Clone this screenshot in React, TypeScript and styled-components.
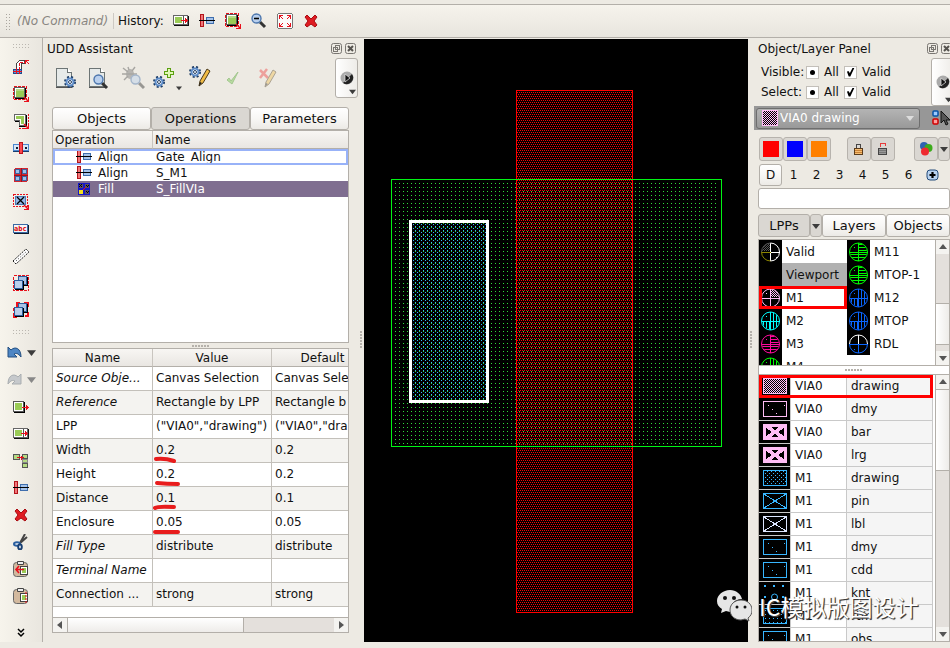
import React, { useId } from "react";
import styled, { createGlobalStyle, css } from "styled-components";

const line = "#b3afa9";
const raised = "linear-gradient(#ffffff, #f8f7f5 50%, #eceae6)";

const GlobalStyle = createGlobalStyle`
  *, *::before, *::after { box-sizing: border-box; }
  body {
    margin: 0;
    background: #edeae3;
    color: #111;
    font: 12px/16px "DejaVu Sans", sans-serif;
    overflow: hidden;
  }
  button, input, select { font: inherit; color: inherit; }
  button { padding: 0; border: 0; background: none; }
  h2 { margin: 0; font: inherit; }
  svg { display: block; flex: none; }
`;

/* ---------- page frame ---------- */
const Page = styled.div`
  height: 100vh;
  display: flex;
  flex-direction: column;
`;
const TopStrip = styled.div`
  height: 5px;
  flex: none;
  border-bottom: 1px solid ${line};
`;
const HistoryBar = styled.header`
  height: 33px;
  flex: none;
  display: flex;
  align-items: center;
  padding-left: 5px;
  border-bottom: 1px solid ${line};
  background: linear-gradient(#f6f3ec, #e8e5de);
`;
const GripV = styled.span`
  width: 5px;
  height: 17px;
  margin-right: 7px;
  background: radial-gradient(circle, #aaa69f 0 1px, transparent 1px) 0 0 / 3px 3px;
`;
const GripH = styled.span`
  width: 18px;
  height: 6px;
  background: radial-gradient(circle, #bbb7b0 0 1px, transparent 1px) 0 0 / 3px 3px;
`;
const CommandText = styled.span`
  min-width: 93px;
  white-space: nowrap;
  font-style: italic;
  color: #888580;
`;
const HistoryLabel = styled.span`
  margin: 0 4px 0 3px;
  padding-left: 4px;
  border-left: 1px solid #cdc9c3;
`;
const Main = styled.div`
  flex: 1;
  min-height: 0;
  display: flex;
  padding-bottom: 6px;
`;
const IconButton = styled.button<{ $w?: number; $h?: number }>`
  display: flex;
  align-items: center;
  justify-content: center;
  flex: none;
  width: ${(p) => p.$w ?? 26}px;
  height: ${(p) => p.$h ?? 27}px;
`;

/* ---------- left tool strip ---------- */
const ToolStrip = styled.nav`
  width: 43px;
  flex: none;
  display: flex;
  flex-direction: column;
  align-items: center;
  padding-top: 5px;
  border-right: 1px solid ${line};
  background: linear-gradient(90deg, #f7f4ec, #e9e6df);
`;
const ToolGroup = styled.div`
  display: flex;
  flex-direction: column;
  align-items: center;
  padding: 4px 0 6px;
`;
const UndoRow = styled.div`
  display: flex;
  align-items: center;
  height: 27px;
  gap: 5px;
`;
const StripEnd = styled.button`
  margin-top: auto;
  padding-bottom: 4px;
`;

/* ---------- shared dock parts ---------- */
const Dock = styled.section<{ $width: number }>`
  width: ${(p) => p.$width}px;
  flex: none;
  min-height: 0;
  display: flex;
  flex-direction: column;
`;
const DockHead = styled.div`
  height: 20px;
  flex: none;
  display: flex;
  align-items: center;
  justify-content: space-between;
  padding: 1px 0 0 4px;
`;
const WindowButtons = styled.div<{ $inset?: boolean }>`
  display: flex;
  gap: 3px;
  margin-right: ${(p) => (p.$inset ? 2 : -2)}px;
`;
const MenuButton = styled.button<{ $h: number; $bleed?: boolean }>`
  position: relative;
  width: 23px;
  height: ${(p) => p.$h}px;
  margin-right: ${(p) => (p.$bleed ? -4 : 0)}px;
  flex: none;
  display: grid;
  place-items: center;
  border: 1px solid ${line};
  border-radius: 3px;
  background: linear-gradient(90deg, #ffffff, #eeece8);
`;
const MenuArrow = styled.span`
  position: absolute;
  right: 1px;
  bottom: 2px;
`;
const Splitter = styled.div<{ $h: number }>`
  flex: none;
  height: ${(p) => p.$h}px;
  display: flex;
  align-items: center;
  justify-content: center;
`;
const Dots = styled.span`
  width: 18px;
  height: 2px;
  background: repeating-linear-gradient(90deg, #b5b1ab 0 2px, transparent 2px 3px);
`;
const SideHandle = styled.div`
  flex: none;
  width: 6px;
  display: flex;
  align-items: center;
  justify-content: center;
  &::before {
    content: "";
    width: 2px;
    height: 18px;
    background: repeating-linear-gradient(#b5b1ab 0 2px, transparent 2px 3px);
  }
`;
const Tab = styled.button<{ $on?: boolean }>`
  height: 23px;
  font-size: 13px;
  border: 1px solid ${line};
  border-radius: 3px;
  background: ${(p) => (p.$on ? "#dad7d2" : raised)};
`;
const TabRow = styled.div`
  display: grid;
  grid-template-columns: 1fr 1fr 1fr;
  flex: none;
`;

/* ---------- UDD assistant ---------- */
const AssistBody = styled.div`
  flex: 1;
  min-height: 0;
  display: flex;
  flex-direction: column;
  padding: 9px;
`;
const AssistTools = styled.div`
  height: 40px;
  flex: none;
  display: flex;
  align-items: center;
  padding-left: 6px;
`;
const DropMark = styled.button`
  align-self: flex-end;
  margin-bottom: 7px;
`;
const Push = styled.span`
  flex: 1;
`;
const OperationBox = styled.div`
  flex: 1;
  min-height: 60px;
  border: 1px solid ${line};
  background: #fff;
`;
const OperationTable = styled.table`
  width: 100%;
  table-layout: fixed;
  border-collapse: separate;
  border-spacing: 0;
  th {
    height: 18px;
    padding: 0 2px;
    font-weight: normal;
    text-align: left;
    background: linear-gradient(#f8f6f3, #e9e6e2);
    border-bottom: 1px solid ${line};
  }
  th + th { border-left: 1px solid #c9c5bf; }
  td { height: 16px; padding: 0 4px; line-height: 16px; }
`;
const OperationRow = styled.tr<{ $state?: "focus" | "selected" }>`
  ${(p) => p.$state === "focus" && css`outline: 2px solid #98b2f8; outline-offset: -2px;`}
  ${(p) => p.$state === "selected" && css`background: #7f6e90; color: #fff;`}
`;
const OperationName = styled.div`
  display: flex;
  align-items: center;
  gap: 6px;
  padding-left: 19px;
`;
const PropertyBox = styled.div`
  flex: none;
  display: flex;
  flex-direction: column;
  height: 285px;
  border: 1px solid ${line};
  background: #fff;
  overflow: hidden;
`;
const PropertyTable = styled.table`
  width: 321px;
  table-layout: fixed;
  border-collapse: separate;
  border-spacing: 0;
  th {
    height: 18px;
    padding: 0;
    font-weight: normal;
    background: linear-gradient(#f8f6f3, #e9e6e2);
    border-right: 1px solid #c9c5bf;
    border-bottom: 1px solid ${line};
  }
  td {
    position: relative;
    height: 24px;
    padding: 0 0 1px 3px;
    white-space: nowrap;
    border-right: 1px solid #c3c0ba;
    border-bottom: 1px solid #c3c0ba;
  }
  tbody tr:nth-child(even) { background: #f4f3f0; }
`;
const Underline = styled.svg`
  position: absolute;
  left: 0;
  bottom: -1px;
`;
const HScroll = styled.div`
  height: 15px;
  margin-top: auto;
  display: flex;
  border-top: 1px solid ${line};
  background: #e4e0dc;
`;
const ScrollButton = styled.button`
  flex: none;
  width: 14px;
  height: 14px;
  display: grid;
  place-items: center;
  background: #f4f3f0;
`;
const HThumb = styled.div`
  width: 60%;
  margin-right: auto;
  border: 1px solid ${line};
  border-width: 0 1px;
  background: linear-gradient(#fff, #eeece9);
`;

/* ---------- canvas ---------- */
const CanvasArea = styled.main`
  flex: 1;
  min-width: 0;
  margin-top: 1px;
  background: #000;
  svg { width: 100%; height: 100%; }
`;

/* ---------- layer panel ---------- */
const LayerDock = styled(Dock)`
  position: relative;
`;
const FilterRow = styled.div`
  display: flex;
`;
const Filters = styled.div`
  flex: 1;
  display: grid;
  grid-template-columns: 44px 38px 1fr;
  grid-auto-rows: 20px;
  align-items: center;
  align-content: start;
  padding: 4px 0 0 7px;
  height: 48px;
`;
const FilterLabel = styled.label`
  display: flex;
  align-items: center;
  gap: 5px;
`;
const Mark = styled.input`
  appearance: none;
  width: 13px;
  height: 13px;
  margin: 0 0 0 1px;
  flex: none;
  display: grid;
  place-items: center;
  background: #fff;
  border: 1px solid #c3bfb9;
  &:checked::before { content: ""; width: 5px; height: 5px; border-radius: 50%; background: #000; }
  &[type="checkbox"]:checked::before {
    width: 9px;
    height: 9px;
    border-radius: 0;
    clip-path: polygon(10% 45%, 32% 42%, 42% 65%, 75% 0, 95% 0, 48% 100%, 30% 100%);
  }
`;
const ComboBand = styled.div`
  flex: none;
  height: 24px;
  display: flex;
  align-items: center;
  gap: 12px;
  padding-left: 2px;
  background: #979797;
`;
const Combo = styled.label`
  width: 164px;
  height: 21px;
  display: flex;
  align-items: center;
  padding: 0 5px;
  border: 1px solid #6e6e6e;
  border-radius: 3px;
  background: linear-gradient(#b4b4b4, #999);
`;
const ComboSelect = styled.select`
  flex: 1;
  appearance: none;
  border: 0;
  padding: 0 0 0 2px;
  background: none;
  color: #fff;
`;
const Swatches = styled.div`
  flex: none;
  display: flex;
  height: 24px;
  margin: 7px 0 2px 5px;
`;
const SquareButton = styled.button<{ $w?: number }>`
  width: ${(p) => p.$w ?? 24}px;
  height: 24px;
  flex: none;
  display: grid;
  place-items: center;
  background: #dad7d2;
  border: 1px solid #b7b3ad;
  border-radius: 3px;
`;
const TabArrow = styled(SquareButton)`
  height: 23px;
`;
const Chip = styled.span<{ $c: string }>`
  width: 16px;
  height: 16px;
  background: ${(p) => p.$c};
`;
const Space = styled.span<{ $w: number }>`
  width: ${(p) => p.$w}px;
`;
const Levels = styled.div`
  flex: none;
  display: flex;
  align-items: center;
  height: 24px;
  margin: 0 6px 1px 5px;
`;
const Level = styled.button<{ $on?: boolean }>`
  width: 23px;
  height: 22px;
  ${(p) => p.$on && css`border: 1px solid ${line}; border-radius: 3px; background: ${raised};`}
`;
const SearchBox = styled.input`
  flex: none;
  height: 21px;
  min-width: 0;
  margin: 0 0 5px 4px;
  background: #fff;
  border: 1px solid ${line};
  border-radius: 3px;
`;
const LayerTabs = styled.div`
  flex: none;
  display: grid;
  grid-template-columns: 52px 12px 64px 1fr;
  margin: 0 0 2px 4px;
`;
const Lists = styled.div`
  flex: 1;
  min-height: 0;
  display: flex;
  flex-direction: column;
  margin-left: 4px;
  border: 1px solid ${line};
  background: #fff;
`;
const GroupPane = styled.div`
  height: 126px;
  flex: none;
  display: flex;
  overflow: hidden;
  border-bottom: 1px solid ${line};
`;
const GroupColumn = styled.ul`
  flex: 1;
  margin: 0;
  padding: 0;
  list-style: none;
`;
const GroupItem = styled.li<{ $gray?: boolean; $boxed?: boolean }>`
  position: relative;
  display: flex;
  align-items: center;
  height: 23px;
  gap: 4px;
  background: ${(p) => (p.$gray ? "#b1b1b1" : "#fff")};
  ${(p) => p.$boxed && css`&::after { content: ""; position: absolute; inset: 0; border: 3px solid #f00; }`}
`;
const LayerPane = styled.div`
  flex: 1;
  min-height: 0;
  display: flex;
  gap: 2px;
  overflow: hidden;
  border-top: 1px solid ${line};
`;
const TableClip = styled.div`
  flex: 1;
  min-width: 0;
  overflow: hidden;
`;
const LayerTable = styled.table`
  width: 100%;
  table-layout: fixed;
  border-collapse: separate;
  border-spacing: 0;
  td {
    height: 23px;
    padding: 0 4px;
    border-right: 1px solid #c9c9c9;
    border-bottom: 1px solid #c9c9c9;
  }
  td:first-child { background: #000; }
  td:last-child { background: #f5f5f5; }
`;
const LayerRow = styled.tr<{ $boxed?: boolean }>`
  ${(p) => p.$boxed && css`outline: 3px solid #f00; outline-offset: -3px;`}
`;
const VScroll = styled.div`
  width: 14px;
  flex: none;
  display: flex;
  flex-direction: column;
  border-left: 1px solid ${line};
  background: #e4e0dc;
`;
const VThumb = styled.div<{ $top: number; $size: number }>`
  margin-top: ${(p) => p.$top}px;
  height: ${(p) => p.$size}px;
  margin-bottom: auto;
  border: 1px solid ${line};
  border-width: 1px 0;
  background: linear-gradient(90deg, #fff, #eeece9);
`;
const Watermark = styled.div`
  position: absolute;
  left: -37px;
  bottom: 19px;
  display: flex;
  align-items: center;
  gap: 7px;
  white-space: nowrap;
  pointer-events: none;
  color: #fff;
  font: 23px/34px "Noto Sans CJK SC", sans-serif;
  text-shadow: 1px 1px 1px #333, 1px 1px 0 #777;
`;

/* ---------- icons ---------- */
type IconProps = { w?: number; h?: number; box?: string; soft?: boolean; children: React.ReactNode };
const Icon = ({ w = 16, h = 16, box, soft, children }: IconProps) => (
  <svg width={w} height={h} viewBox={box ?? `0 0 ${w} ${h}`} fill="none" shapeRendering={soft ? "auto" : "crispEdges"} aria-hidden="true">
    {children}
  </svg>
);
const Triangle = ({ dir = "down", size = 8, color = "#3c3c3c" }: { dir?: "up" | "down" | "left" | "right"; size?: number; color?: string }) => {
  const turn = { down: 0, left: 90, up: 180, right: 270 }[dir];
  return (
    <Icon w={size} h={size} box="0 0 8 8" soft>
      <path d="M0 2h8L4 7z" fill={color} transform={`rotate(${turn} 4 4)`} />
    </Icon>
  );
};
const CornerArrow = () => (
  <g stroke="#e8101c">
    <path d="M11 11l4 4" shapeRendering="auto" strokeWidth="1.4" />
    <path d="M15.5 11v4.500H11" />
  </g>
);
const GreenSquare = () => (
  <Icon>
    <rect x="0.5" y="0.5" width="13" height="13" stroke="#e8101c" strokeDasharray="3 1" />
    <rect x="1" y="1" width="12" height="12" fill="#f3b9b4" />
    <rect x="1.5" y="1.5" width="10" height="10" fill="#fff" stroke="#5a5a5a" />
    <path d="M2 12.500h10.500V2" stroke="#000" />
    <rect x="3" y="3" width="8" height="8" fill="#9acb55" />
    <path d="M3 3h8v2H3z" fill="#b5da83" />
    <CornerArrow />
  </Icon>
);
const GreenPoly = () => (
  <Icon>
    <path d="M1.500 1.500h11v11h-6v-5h-5z" fill="#fff" stroke="#666" />
    <path d="M3 3h8v8H8V6H3z" fill="#9acb55" />
    <path d="M2 8.500h4M6 13.500h7.500V2" stroke="#000" />
    <path d="M15 1v10M6 15h5" stroke="#e8101c" strokeDasharray="2 1" />
    <CornerArrow />
  </Icon>
);
const RoutePath = () => (
  <Icon>
    <path d="M3.500 12V4.500l3-3H11v3H8.500v8z" fill="#fff" stroke="#444" />
    <path d="M6 15V3.500h6" stroke="#e8101c" strokeDasharray="3 1" />
    <rect x="0.500" y="10.500" width="8" height="4" fill="#5c93dc" stroke="#1c4c8e" />
    <path d="M0 12.500h9M3.500 9v6M6.500 9v6" stroke="#e8101c" />
    <path d="M12.500 5V1.500H16M13 2l3 3" stroke="#e8101c" />
  </Icon>
);
const PinPair = () => (
  <Icon>
    <rect x="0.5" y="4.500" width="6" height="6" fill="#d9e6f6" stroke="#4c87cf" />
    <rect x="9.5" y="4.500" width="6" height="6" fill="#d9e6f6" stroke="#4c87cf" />
    <path d="M0 11.500h16" stroke="#173e6e" />
    <path d="M3 7h2v2H3zM12 7h2v2h-2z" fill="#123" />
    <rect x="6.500" y="2.500" width="3" height="11" fill="#f8484f" stroke="#c2121a" />
  </Icon>
);
const GridFour = () => (
  <Icon>
    <rect x="1" y="1" width="14" height="14" rx="2" fill="#d4252e" />
    <path d="M2.500 2.500h4v4h-4zM9.500 2.500h4v4h-4zM2.500 9.500h4v4h-4zM9.500 9.500h4v4h-4z" fill="#9dc0ea" stroke="#3a63a0" />
    <path d="M8 1v14M1 8h14" stroke="#a0101a" />
  </Icon>
);
const Instance = () => (
  <Icon>
    <rect x="0.5" y="0.5" width="14" height="12" stroke="#e8101c" strokeDasharray="2 1" />
    <rect x="2.500" y="2.500" width="10" height="8" fill="#94b8e6" stroke="#4d79b4" />
    <path d="M4 3l7 7M11 3l-7 7" stroke="#000" strokeWidth="1.3" shapeRendering="auto" />
    <CornerArrow />
  </Icon>
);
const TextTag = () => (
  <Icon>
    <rect x="1" y="4" width="15" height="9" fill="#0c1c30" />
    <rect x="0.500" y="3.500" width="14" height="8" fill="#f4f6fa" stroke="#3a6aa4" />
    <text x="1" y="10" fontSize="7" fontWeight="bold" fontFamily="DejaVu Sans Mono, monospace" fill="#d00" shapeRendering="auto">abc</text>
  </Icon>
);
const Ruler = () => (
  <Icon soft>
    <path d="M0 13L13 1l3 3L3 16z" fill="#fff" stroke="#222" strokeWidth="1" strokeDasharray="2 1" />
    <path d="M3 13L14 3" stroke="#333" strokeDasharray="1 2" />
  </Icon>
);
const Stack = ({ corners }: { corners?: boolean }) => (
  <Icon>
    {corners ? (
      <path d="M4 5V1h3M11 1h4v4M15 10v4h-3M1 11v4h3M1 9V7h3" stroke="#f00f1c" strokeWidth="2" />
    ) : (
      <rect x="0.5" y="0.5" width="15" height="15" stroke="#e8101c" strokeDasharray="3 1" />
    )}
    <rect x="5.500" y="1.500" width="8" height="8" fill="#a9c3e6" stroke="#2b5c9c" />
    <path d="M6 10.500h8.500V2" stroke="#000" />
    <rect x="1.500" y="5.500" width="8" height="8" fill="#b9cfec" stroke="#2b5c9c" />
    <path d="M2 14.500h8.500V6" stroke="#000" />
  </Icon>
);
const UndoArrow = ({ flip, faded }: { flip?: boolean; faded?: boolean }) => (
  <Icon w={15} h={13} soft>
    <path
      d="M1 1l3 3c4-4 10-2 10 7-3-4-5-4-7-3l3 3H1z"
      fill={faded ? "#c6c9cc" : "#4e86c4"}
      stroke={faded ? "#a9adb0" : "#244f80"}
      transform={flip ? "matrix(-1 0 0 1 15 0)" : undefined}
    />
  </Icon>
);
const StretchOut = () => (
  <Icon>
    <rect x="0.500" y="2.500" width="10" height="10" fill="#fff" stroke="#555" />
    <path d="M1 13.500h10.500V3" stroke="#000" />
    <rect x="2" y="4" width="7" height="7" fill="#9acb55" />
    <path d="M9 8.500h7M13.500 6v5M14.500 7v3" stroke="#e8101c" />
  </Icon>
);
const StretchIn = () => (
  <Icon>
    <path d="M0.500 2.500h14v9h-14z" fill="#fff" stroke="#666" />
    <path d="M1 12.500h14.500V3" stroke="#111" />
    <path d="M10.500 3v9" stroke="#555" />
    <rect x="2" y="4" width="7" height="6" fill="#9acb55" />
    <path d="M8 7.500h7M12.500 5v5M13.500 6v3" stroke="#e8101c" />
  </Icon>
);
const Tree = () => (
  <Icon>
    <rect x="0.500" y="1.500" width="6" height="5" fill="#b5da83" stroke="#555" />
    <rect x="9.500" y="1.500" width="5" height="4" fill="#b5da83" stroke="#555" />
    <rect x="9.500" y="6.500" width="5" height="3" fill="#b5da83" stroke="#888" />
    <rect x="9.500" y="10.500" width="5" height="4" fill="#b5da83" stroke="#555" />
    <path d="M4 4.500h7M8.500 3v4" stroke="#e8101c" />
  </Icon>
);
const AlignIcon = () => (
  <Icon>
    <rect x="1.5" y="1.5" width="3" height="12" fill="#f0777a" stroke="#b3141b" />
    <rect x="7.5" y="4.5" width="7" height="6" fill="#a5c3ea" stroke="#3f6ead" />
    <path d="M0 7.500h16" stroke="#000" />
  </Icon>
);
const RedX = () => (
  <Icon w={14} h={14} soft>
    <path d="M1 3l2-2 4 4 4-4 2 2-3 4 3 4-2 2-4-3-4 3-2-2 3-4z" fill="#df1c22" stroke="#a90c12" />
  </Icon>
);
const Scissors = () => (
  <Icon soft>
    <path d="M12 0L7 9M14 3L6 10" stroke="#444" strokeWidth="2" />
    <ellipse cx="4" cy="10" rx="3" ry="1.8" stroke="#2a5f9f" strokeWidth="2" fill="#fff" />
    <ellipse cx="7" cy="13" rx="1.8" ry="2.4" stroke="#173f73" strokeWidth="2" fill="#fff" />
  </Icon>
);
const Clip = ({ arrow }: { arrow?: boolean }) => (
  <Icon soft>
    <rect x="0.500" y="1.500" width="14" height="14" rx="3" fill="#d3b99e" stroke="#666" />
    <path d="M4.500 0.500h6v3h-6z" fill="#eee" stroke="#444" />
    <rect x="7.500" y="5.500" width="7" height="8" fill="#fff" stroke="#444" />
    <rect x="9" y="7" width="4" height="5" fill="#9acb55" />
    {arrow ? <path d="M11 8.500H3M6 5L3 8.500 6 12" stroke="#e8101c" strokeWidth="1.6" /> : <path d="M13 4v12" stroke="#e8101c" strokeDasharray="2 1" />}
  </Icon>
);
const Chevrons = () => (
  <Icon w={8} h={10} soft>
    <path d="M1 1l3 3 3-3M1 5l3 3 3-3" stroke="#000" strokeWidth="1.5" />
  </Icon>
);
const Lens = ({ x, y, minus }: { x: number; y: number; minus?: boolean }) => (
  <g transform={`translate(${x} ${y})`} shapeRendering="auto">
    <path d="M9 9l5 5" stroke="#333" strokeWidth="3" />
    <circle cx="5.500" cy="5.500" r="4.500" fill="#b9d0ee" stroke="#4c76ad" strokeWidth="1.400" />
    {minus && <path d="M3 5.500h5" stroke="#000" strokeWidth="1.6" />}
  </g>
);
const ZoomOut = () => <Icon><Lens x={0} y={0} minus /></Icon>;
const Fit = () => (
  <Icon>
    <rect x="0.5" y="0.5" width="15" height="15" rx="2" fill="#fbfbfa" stroke="#777" />
    <path d="M6 6L3 3M2.500 6V2.500H6M10 6l3-3M10 2.500h3.500V6M6 10l-3 3M2.500 10v3.500H6M10 10l3 3M13.500 10v3.500H10" stroke="#e8101c" />
  </Icon>
);
const Gear = ({ x, y }: { x: number; y: number }) => (
  <g transform={`translate(${x} ${y})`} shapeRendering="auto">
    <circle cx="6" cy="6" r="5" stroke="#1d3d66" strokeWidth="2" strokeDasharray="2 2" />
    <circle cx="6" cy="6" r="3.500" fill="#fff" stroke="#5c8bc8" strokeWidth="2" />
    <circle cx="6" cy="6" r="1.500" fill="#fff" stroke="#223f66" />
  </g>
);
const Sheet = () => (
  <>
    <path d="M2.500 2.500h11l4 4v14h-15z" fill="#e6eae9" stroke="#6d7575" />
    <path d="M13.500 2.500v4h4" fill="#fff" stroke="#6d7575" />
    <path d="M2 21.500h16" stroke="#555" />
  </>
);
const SheetGear = () => <Icon w={24} h={24}><Sheet /><Gear x={10} y={10} /></Icon>;
const SheetLens = () => <Icon w={24} h={24}><Sheet /><Lens x={6} y={8} /></Icon>;
const BugLens = () => (
  <Icon w={24} h={24} soft>
    <g opacity="0.45">
      <ellipse cx="9" cy="8" rx="4" ry="5" fill="#777" />
      <path d="M2 2l5 4M14 1l-3 4M1 8h15M3 14l4-4M13 11l3 3M7 1l1 3" stroke="#555" strokeWidth="1.400" />
      <Lens x={9} y={8} />
    </g>
  </Icon>
);
const GearPlus = () => (
  <Icon w={24} h={24}>
    <Gear x={1} y={10} />
    <path d="M15.500 2.500h3v3h3v3h-3v3h-3v-3h-3v-3h3z" fill="#e0f7b4" stroke="#5a9f10" />
  </Icon>
);
const Pencil = ({ x }: { x: number }) => (
  <g transform={`translate(${x} 0)`} shapeRendering="auto">
    <path d="M0 20l1-5L8 3l3 2L4 17z" fill="#f1bc45" stroke="#4b3a1c" />
    <path d="M0 20l1-4 2 1z" fill="#222" />
  </g>
);
const GearPencil = () => <Icon w={24} h={24}><Gear x={1} y={0} /><Pencil x={11} /></Icon>;
const Check = () => (
  <Icon w={14} h={14} soft>
    <path d="M1 9l2-2 2 3 7-9-6 12z" fill="#b8dba0" stroke="#a3c78f" />
  </Icon>
);
const XPencil = () => (
  <Icon w={20} h={22} soft>
    <g opacity="0.4"><path d="M2 3l8 8M9 2L2 11" stroke="#e33" strokeWidth="2.500" /><Pencil x={7} /></g>
  </Icon>
);
const Restore = () => (
  <Icon w={11} h={11}>
    <rect x="0.500" y="0.500" width="10" height="10" rx="2" stroke="#7a7772" shapeRendering="auto" />
    <path d="M4.500 2.500h4v4h-4zM2.500 4.500h4v4h-4z" stroke="#7a7772" />
  </Icon>
);
const Close = () => (
  <Icon w={11} h={11} soft>
    <rect x="0.500" y="0.500" width="10" height="10" rx="2" stroke="#7a7772" />
    <path d="M3 3l5 5M8 3L3 8" stroke="#55524e" strokeWidth="2" />
  </Icon>
);
const Play = () => (
  <Icon w={14} h={14} soft>
    <circle cx="7" cy="7" r="6.500" fill="#aaa" />
    <path d="M12 3a6.500 6.500 0 0 1-9 9z" fill="#222" />
    <path d="M5 3l5 4-5 4z" fill="#111" stroke="#ddd" strokeWidth="0.800" />
  </Icon>
);
const FillIcon = () => (
  <Icon w={16} h={12} box="-2 0 16 12">
    <rect width="12" height="12" fill="#1616c8" />
    <path d="M1 1h4v4H1zM7 1h4v4H7zM7 7h4v4H7z" fill="#5a5060" />
    <path d="M1 1h1v1H1zM3 1h1v1H3zM2 2h1v1H2zM1 3h1v1H1zM3 3h1v1H3zM8 2h1v1H8zM10 2h1v1h-1zM9 3h1v1H9zM8 8h1v1H8zM10 8h1v1h-1zM9 9h1v1H9z" fill="#000" />
    <path d="M5 7l3-3" stroke="#e11" />
    <path d="M1 7h4v4H1z" fill="#f2df1f" />
  </Icon>
);
const PickIcon = () => (
  <Icon w={18} h={16} soft>
    <rect x="1" y="1" width="5" height="5" rx="1" fill="#9ccaff" stroke="#0754a8" strokeWidth="1.500" />
    <rect x="1" y="9" width="5" height="5" rx="1" fill="#ff9f9f" stroke="#cf0000" strokeWidth="1.500" />
    <path d="M9 1v12l3-3 2 5 2-1-2-4h4z" fill="#555" stroke="#111" />
  </Icon>
);
const Lock = ({ open }: { open?: boolean }) => (
  <Icon w={12} h={14}>
    <path d={open ? "M3.500 5V1.500h5V4" : "M3.500 6V2.500h4V6"} stroke={open ? "#e63b3b" : "#444"} />
    <rect x="1.500" y="6.500" width="8" height="6" fill={open ? "#999" : "#f5bd73"} stroke={open ? "#444" : "#5a3c1c"} />
    <path d="M2 8.500h7M2 10.500h7" stroke={open ? "#777" : "#c98236"} />
  </Icon>
);
const Balls = () => (
  <Icon w={14} h={14} soft>
    <circle cx="5" cy="4" r="4" fill="#2e63b0" />
    <circle cx="9.500" cy="6" r="4" fill="#3cab1b" />
    <circle cx="6" cy="9.500" r="4" fill="#ee2a2f" />
  </Icon>
);
const PlusRound = () => (
  <Icon w={13} h={12} soft>
    <rect x="1" y="1" width="11" height="10" rx="3" fill="#b9d3f0" stroke="#234a78" />
    <path d="M6.500 3v6M3.500 6h6" stroke="#000" strokeWidth="2.200" />
  </Icon>
);

/* ---------- layer swatches ---------- */
type Hatch = "v" | "h" | "checker" | "dot" | "none";
type WheelSpec = { top: string; left?: string; bottom?: string; quads: [Hatch, Hatch, Hatch, Hatch] };
const Wheel = ({ spec }: { spec?: WheelSpec }) => {
  const id = useId().replace(/[^a-zA-Z0-9]/g, "");
  if (!spec) return <Icon w={23} h={23}><rect width="23" height="23" fill="#000" /></Icon>;
  const bottom = spec.bottom ?? spec.top;
  const mixed = spec.left !== undefined;
  const origin = [[2, 3], [12, 3], [2, 13], [12, 13]];
  const colors = [mixed ? "#555" : spec.top, spec.top, spec.left ?? bottom, bottom];
  return (
    <Icon w={23} h={23}>
      <rect width="23" height="23" fill="#000" />
      <clipPath id={id}><circle cx="11.500" cy="12" r="8.500" /></clipPath>
      <g clipPath={`url(#${id})`}>
        {spec.quads.map((q, i) => {
          const [x, y] = origin[i];
          const c = colors[i];
          if (q === "v") return <path key={i} d={`M${x + 2.5} ${y}v9M${x + 5.5} ${y}v9M${x + 8.5} ${y}v9`} stroke={c} />;
          if (q === "h") return <path key={i} d={`M${x} ${y + 1.5}h9M${x} ${y + 4.5}h9M${x} ${y + 7.5}h9`} stroke={c} />;
          if (q === "dot") return <rect key={i} x={x + 5} y={y + 4} width="1" height="1" fill={c} />;
          if (q === "checker")
            return <g key={i}>{[0, 1, 2, 3, 4, 5, 6, 7].map((r) => <path key={r} d={`M${x + (r % 2)} ${y + r + 0.5}h9`} stroke={c} strokeDasharray="1 1" />)}</g>;
          return null;
        })}
      </g>
      <path d="M11.500 3v9" stroke={colors[1]} />
      <path d="M11.500 12v9" stroke={colors[3]} />
      <path d="M2.500 12.500h9" stroke={colors[2]} />
      <path d="M11.500 12.500h9" stroke={colors[3]} />
      <g shapeRendering="auto">
        <path d="M2.500 12a9 9 0 0 1 9-9" stroke={colors[0]} />
        <path d="M11.500 3a9 9 0 0 1 9 9" stroke={colors[1]} />
        <path d="M2.500 12a9 9 0 0 0 9 9" stroke={colors[2]} />
        <path d="M20.500 12a9 9 0 0 1-9 9" stroke={colors[3]} />
      </g>
    </Icon>
  );
};

type Fill = "checker" | "sparse" | "bowtie" | "dots" | "cross" | "grid" | "contact";
const LayerSwatch = ({ fill, color, w = 24, h = 16 }: { fill: Fill; color: string; w?: number; h?: number }) => {
  const id = useId().replace(/[^a-zA-Z0-9]/g, "");
  return (
    <Icon w={w} h={h}>
      <defs>
        <pattern id={id} width={fill === "checker" ? 2 : 4} height={fill === "checker" ? 2 : 4} patternUnits="userSpaceOnUse">
          <path d={fill === "checker" ? "M0 0h1v1H0zM1 1h1v1H1z" : fill === "grid" ? "M2 2h1v1H2z" : "M0 1h1v1H0zM2 3h1v1H2z"} fill={color} />
        </pattern>
      </defs>
      <rect width={w} height={h} fill="#000" />
      {fill !== "contact" && <rect x="0.500" y="0.500" width={w - 1} height={h - 1} stroke={color} />}
      {(fill === "checker" || fill === "dots" || fill === "grid") && <rect x="1" y="1" width={w - 2} height={h - 2} fill={`url(#${id})`} />}
      {fill === "sparse" && <path d="M5 4h1v1H5zM9 8h1v1H9zM13 12h1v1h-1zM21 4h1v1h-1z" fill={color} />}
      {fill === "cross" && <path d="M1 1l22 14M23 1L1 15" stroke={color} />}
      {fill === "bowtie" && (
        <>
          <rect width="24" height="16" fill={color} />
          <path d="M3 4l6 4-6 4zM21 4l-6 4 6 4zM8 3h8l-4 3zM8 13h8l-4-3z" fill="#000" />
        </>
      )}
      {fill === "contact" && (
        <>
          <path d="M1 0h2v2H1zM10 0h2v2h-2zM19 0h2v2h-2zM1 11h2v2H1zM19 11h2v2h-2z" fill={color} />
          <circle cx="11.500" cy="12" r="3" stroke={color} shapeRendering="auto" />
        </>
      )}
    </Icon>
  );
};

/* ---------- data ---------- */
const strip: [string, React.ReactNode][] = [
  ["Create wire", <RoutePath />], ["Create rectangle", <GreenSquare />], ["Create polygon", <GreenPoly />],
  ["Create pin", <PinPair />], ["Create via", <GridFour />], ["Create instance", <Instance />],
  ["Create label", <TextTag />], ["Ruler", <Ruler />], ["Group", <Stack />], ["Ungroup", <Stack corners />],
];
const editStrip: [string, React.ReactNode][] = [
  ["Move", <StretchOut />], ["Stretch", <StretchIn />], ["Copy", <Tree />], ["Align", <AlignIcon />],
  ["Delete", <RedX />], ["Cut", <Scissors />], ["Yank", <Clip arrow />], ["Paste", <Clip />],
];
const history: [string, React.ReactNode][] = [
  ["Stretch", <StretchIn />], ["Align", <AlignIcon />], ["Create rectangle", <GreenSquare />],
  ["Zoom out", <ZoomOut />], ["Fit", <Fit />], ["Delete", <RedX />],
];
type Property = { name: string; value: string; alt?: string; italic?: boolean; mark?: string };
const properties: Property[] = [
  { name: "Source Obje...", value: "Canvas Selection", alt: "Canvas Sele", italic: true },
  { name: "Reference", value: "Rectangle by LPP", alt: "Rectangle b", italic: true },
  { name: "LPP", value: '("VIA0","drawing")', alt: '("VIA0","dra' },
  { name: "Width", value: "0.2", mark: "M3 3q9-1 18 2" },
  { name: "Height", value: "0.2", mark: "M4 3q10 1 21 1" },
  { name: "Distance", value: "0.1", mark: "M2 4q3-2 19-1" },
  { name: "Enclosure", value: "0.05", mark: "M2 4h23" },
  { name: "Fill Type", value: "distribute", italic: true },
  { name: "Terminal Name", value: "", italic: true },
  { name: "Connection ...", value: "strong" },
];
const groupsLeft: { name: string; spec?: WheelSpec }[] = [
  { name: "Valid", spec: { top: "#ffffff", left: "#8b8400", quads: ["checker", "none", "none", "dot"] } },
  { name: "Viewport" },
  { name: "M1", spec: { top: "#ffbdf5", quads: ["dot", "checker", "none", "none"] } },
  { name: "M2", spec: { top: "#00ffff", quads: ["dot", "v", "v", "v"] } },
  { name: "M3", spec: { top: "#ff0a9c", quads: ["dot", "h", "h", "h"] } },
  { name: "M4", spec: { top: "#00ff00", quads: ["dot", "v", "v", "v"] } },
];
const groupsRight: { name: string; spec: WheelSpec }[] = [
  { name: "M11", spec: { top: "#00ff00", quads: ["dot", "h", "h", "h"] } },
  { name: "MTOP-1", spec: { top: "#00ff00", quads: ["dot", "h", "h", "h"] } },
  { name: "M12", spec: { top: "#0a66ff", quads: ["dot", "v", "v", "v"] } },
  { name: "MTOP", spec: { top: "#0a66ff", quads: ["dot", "v", "v", "v"] } },
  { name: "RDL", spec: { top: "#ffffff", bottom: "#0a66ff", quads: ["none", "none", "dot", "none"] } },
];
const pink = "#ffbdf5";
const sky = "#38b6ff";
const layers: [string, string, Fill, string][] = [
  ["VIA0", "drawing", "checker", pink], ["VIA0", "dmy", "sparse", pink], ["VIA0", "bar", "bowtie", pink],
  ["VIA0", "lrg", "bowtie", pink], ["M1", "drawing", "dots", sky], ["M1", "pin", "cross", sky],
  ["M1", "lbl", "cross", "#dce6ff"], ["M1", "dmy", "sparse", sky], ["M1", "cdd", "sparse", sky],
  ["M1", "knt", "contact", sky], ["M1", "rtm", "grid", sky], ["M1", "obs", "sparse", sky],
];

const Layout = () => (
  <svg viewBox="0 0 384 603" shapeRendering="crispEdges" role="img" aria-label="Layout canvas">
    <defs>
      <pattern id="poly" width="2" height="4" patternUnits="userSpaceOnUse">
        <path d="M1 1h1v1H1zM0 3h1v1H0z" fill="#f00" />
      </pattern>
      <pattern id="active" width="4" height="4" patternUnits="userSpaceOnUse">
        <path d="M3 0h1v1H3z" fill="#2fdc3a" />
      </pattern>
      <pattern id="metal" width="4" height="4" patternUnits="userSpaceOnUse">
        <path d="M1 1h1v1H1zM3 3h1v1H3z" fill={sky} />
      </pattern>
    </defs>
    <rect x="30" y="143" width="325" height="264" fill="url(#active)" />
    <rect x="46" y="182" width="78" height="182" fill="url(#metal)" />
    <rect x="153" y="52" width="115" height="522" fill="url(#poly)" />
    <rect x="152.500" y="51.500" width="116" height="522" fill="none" stroke="#f00" />
    <rect x="27.500" y="140.500" width="330" height="267" fill="none" stroke="#00f414" />
    <rect x="46.500" y="182.500" width="77" height="180" fill="none" stroke="#fff" strokeWidth="3" />
  </svg>
);

const WeChat = () => (
  <Icon w={35} h={33} soft>
    <path d="M13 0C6 0 0 5 0 11c0 4 2 6 5 8l-1 4 5-2 4 1h2C12 14 18 9 25 9 24 4 19 0 13 0z" fill="#e6e6e6" />
    <path d="M24 10c-6 0-11 4-11 10s5 10 11 10l4-1 4 2-1-3c3-2 4-5 4-8 0-6-5-10-11-10z" fill="#e6e6e6" stroke="#555" />
    <circle cx="8" cy="8" r="2" fill="#111" /><circle cx="17" cy="8" r="2" fill="#111" />
    <circle cx="20" cy="17" r="1.500" fill="#111" /><circle cx="28" cy="17" r="1.500" fill="#111" />
  </Icon>
);

export default function App() {
  return (
    <Page>
      <GlobalStyle />
      <TopStrip />
      <HistoryBar>
        <GripV />
        <CommandText>(No Command)</CommandText>
        <HistoryLabel>History:</HistoryLabel>
        {history.map(([name, icon], i) => <IconButton key={i} aria-label={name}>{icon}</IconButton>)}
      </HistoryBar>
      <Main>
        <ToolStrip aria-label="Edit tools">
          <GripH />
          <ToolGroup>
            {strip.map(([name, icon]) => <IconButton key={name} aria-label={name}>{icon}</IconButton>)}
          </ToolGroup>
          <GripH />
          <ToolGroup>
            <UndoRow>
              <button aria-label="Undo"><UndoArrow /></button>
              <button aria-label="Undo list"><Triangle size={9} /></button>
            </UndoRow>
            <UndoRow>
              <button aria-label="Redo"><UndoArrow flip faded /></button>
              <button aria-label="Redo list"><Triangle size={9} color="#888" /></button>
            </UndoRow>
            {editStrip.map(([name, icon]) => <IconButton key={name} aria-label={name}>{icon}</IconButton>)}
          </ToolGroup>
          <StripEnd aria-label="More tools"><Chevrons /></StripEnd>
        </ToolStrip>

        <Dock $width={315}>
          <DockHead>
            <h2>UDD Assistant</h2>
            <WindowButtons $inset>
              <button aria-label="Float"><Restore /></button>
              <button aria-label="Close"><Close /></button>
            </WindowButtons>
          </DockHead>
          <AssistTools>
            <IconButton $w={33} aria-label="New"><SheetGear /></IconButton>
            <IconButton $w={33} aria-label="View"><SheetLens /></IconButton>
            <IconButton $w={36} aria-label="Debug"><BugLens /></IconButton>
            <IconButton $w={25} aria-label="Add operation"><GearPlus /></IconButton>
            <DropMark aria-label="Operation list"><Triangle size={6} /></DropMark>
            <IconButton $w={36} aria-label="Edit operation"><GearPencil /></IconButton>
            <IconButton $w={30} aria-label="Apply"><Check /></IconButton>
            <IconButton $w={40} aria-label="Discard"><XPencil /></IconButton>
            <Push />
            <MenuButton $h={40} aria-label="Menu"><Play /><MenuArrow><Triangle size={7} /></MenuArrow></MenuButton>
          </AssistTools>
          <AssistBody>
            <TabRow role="tablist">
              <Tab role="tab">Objects</Tab>
              <Tab role="tab" $on aria-selected>Operations</Tab>
              <Tab role="tab">Parameters</Tab>
            </TabRow>
            <OperationBox>
              <OperationTable>
                <colgroup><col width="99" /><col /></colgroup>
                <thead><tr><th>Operation</th><th>Name</th></tr></thead>
                <tbody>
                  <OperationRow $state="focus"><td><OperationName><AlignIcon />Align</OperationName></td><td>Gate_Align</td></OperationRow>
                  <OperationRow><td><OperationName><AlignIcon />Align</OperationName></td><td>S_M1</td></OperationRow>
                  <OperationRow $state="selected"><td><OperationName><FillIcon />Fill</OperationName></td><td>S_FillVIa</td></OperationRow>
                </tbody>
              </OperationTable>
            </OperationBox>
            <Splitter $h={5}><Dots /></Splitter>
            <PropertyBox>
              <PropertyTable>
                <colgroup><col width="100" /><col width="119" /><col width="102" /></colgroup>
                <thead><tr><th>Name</th><th>Value</th><th>Default</th></tr></thead>
                <tbody>
                  {properties.map((p) => (
                    <tr key={p.name}>
                      <td>{p.italic ? <i>{p.name}</i> : p.name}</td>
                      <td>
                        {p.value}
                        {p.mark && (
                          <Underline width="30" height="7" aria-hidden="true">
                            <path d={p.mark} fill="none" stroke="#e81c1c" strokeWidth="4" strokeLinecap="round" />
                          </Underline>
                        )}
                      </td>
                      <td>{p.alt ?? p.value}</td>
                    </tr>
                  ))}
                </tbody>
              </PropertyTable>
              <HScroll>
                <ScrollButton aria-label="Scroll left"><Triangle dir="left" color="#555" /></ScrollButton>
                <HThumb />
                <ScrollButton aria-label="Scroll right"><Triangle dir="right" color="#555" /></ScrollButton>
              </HScroll>
            </PropertyBox>
          </AssistBody>
        </Dock>
        <SideHandle />
        <CanvasArea><Layout /></CanvasArea>
        <SideHandle />

        <LayerDock $width={196}>
          <DockHead>
            <h2>Object/Layer Panel</h2>
            <WindowButtons>
              <button aria-label="Float"><Restore /></button>
              <button aria-label="Close"><Close /></button>
            </WindowButtons>
          </DockHead>
          <FilterRow>
            <Filters>
              <span>Visible:</span>
              <FilterLabel><Mark type="radio" name="visible" defaultChecked />All</FilterLabel>
              <FilterLabel><Mark type="checkbox" defaultChecked />Valid</FilterLabel>
              <span>Select:</span>
              <FilterLabel><Mark type="radio" name="select" defaultChecked />All</FilterLabel>
              <FilterLabel><Mark type="checkbox" defaultChecked />Valid</FilterLabel>
            </Filters>
            <MenuButton $h={48} $bleed aria-label="Panel menu"><Play /><MenuArrow><Triangle size={7} /></MenuArrow></MenuButton>
          </FilterRow>
          <ComboBand>
            <Combo>
              <LayerSwatch fill="checker" color={pink} w={16} h={16} />
              <ComboSelect aria-label="Active layer"><option>VIA0 drawing</option></ComboSelect>
              <Triangle color="#ddd" />
            </Combo>
            <button aria-label="Pick layer"><PickIcon /></button>
          </ComboBand>
          <Swatches>
            <SquareButton aria-label="Red"><Chip $c="#ff0000" /></SquareButton>
            <SquareButton aria-label="Blue"><Chip $c="#0000ff" /></SquareButton>
            <SquareButton aria-label="Orange"><Chip $c="#ff8000" /></SquareButton>
            <Space $w={16} />
            <SquareButton aria-label="Lock"><Lock /></SquareButton>
            <SquareButton aria-label="Unlock"><Lock open /></SquareButton>
            <Space $w={19} />
            <SquareButton aria-label="Colors"><Balls /></SquareButton>
            <SquareButton $w={12} aria-label="Color menu"><Triangle /></SquareButton>
          </Swatches>
          <Levels>
            <Level $on>D</Level>
            {[1, 2, 3, 4, 5, 6].map((n) => <Level key={n}>{n}</Level>)}
            <IconButton $w={24} $h={22} aria-label="Add level"><PlusRound /></IconButton>
          </Levels>
          <SearchBox aria-label="Filter layers" />
          <LayerTabs>
            <Tab $on>LPPs</Tab>
            <TabArrow $w={12} aria-label="LPP menu"><Triangle /></TabArrow>
            <Tab>Layers</Tab>
            <Tab>Objects</Tab>
          </LayerTabs>
          <Lists>
            <GroupPane>
              <GroupColumn>
                {groupsLeft.map((g) => (
                  <GroupItem key={g.name} $gray={g.name === "Viewport"} $boxed={g.name === "M1"}><Wheel spec={g.spec} />{g.name}</GroupItem>
                ))}
              </GroupColumn>
              <GroupColumn>
                {groupsRight.map((g) => <GroupItem key={g.name}><Wheel spec={g.spec} />{g.name}</GroupItem>)}
              </GroupColumn>
              <VScroll>
                <ScrollButton aria-label="Scroll up"><Triangle dir="up" color="#555" /></ScrollButton>
                <VThumb $top={49} $size={42} />
                <ScrollButton aria-label="Scroll down"><Triangle color="#555" /></ScrollButton>
              </VScroll>
            </GroupPane>
            <Splitter $h={8}><Dots /></Splitter>
            <LayerPane>
              <TableClip>
                <LayerTable>
                  <colgroup><col width="32" /><col width="56" /><col /></colgroup>
                  <tbody>
                    {layers.map(([layer, purpose, fill, color], i) => (
                      <LayerRow key={i} $boxed={i === 0}>
                        <td><LayerSwatch fill={fill} color={color} /></td>
                        <td>{layer}</td>
                        <td>{purpose}</td>
                      </LayerRow>
                    ))}
                  </tbody>
                </LayerTable>
              </TableClip>
              <VScroll>
                <ScrollButton aria-label="Scroll up"><Triangle dir="up" color="#555" /></ScrollButton>
                <VThumb $top={0} $size={82} />
                <ScrollButton aria-label="Scroll down"><Triangle color="#555" /></ScrollButton>
              </VScroll>
            </LayerPane>
          </Lists>
          <Watermark><WeChat />IC模拟版图设计</Watermark>
        </LayerDock>
      </Main>
    </Page>
  );
}
